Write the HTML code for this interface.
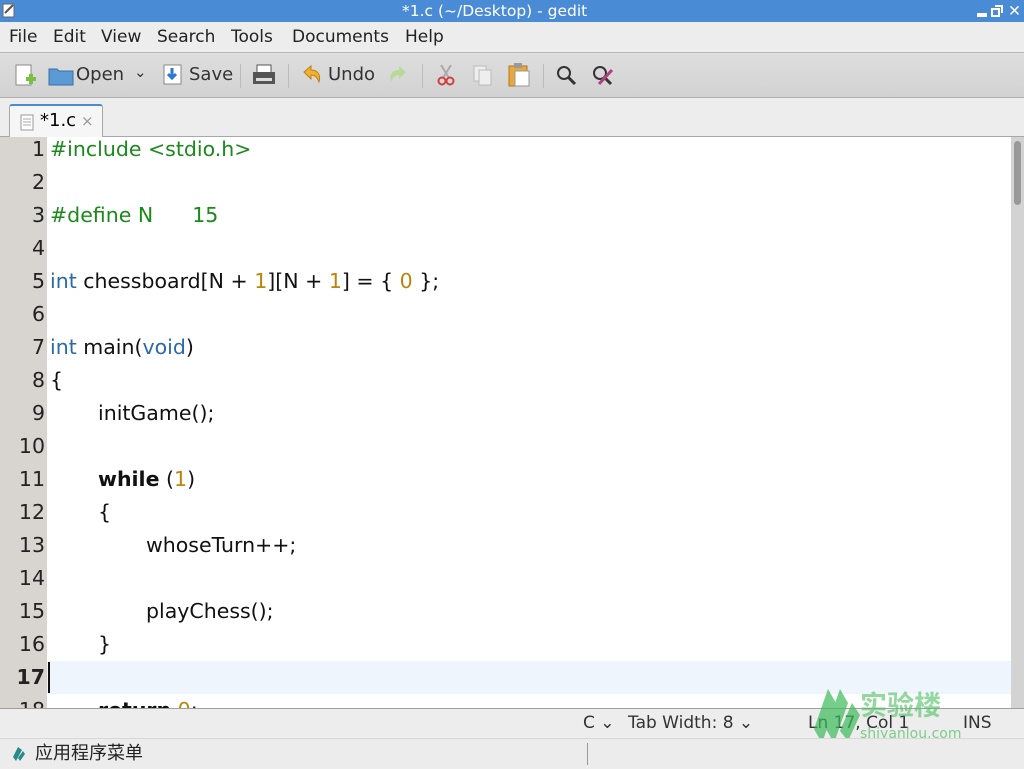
<!DOCTYPE html>
<html><head><meta charset="utf-8"><style>
*{margin:0;padding:0;box-sizing:border-box}
body{width:1024px;height:768px;overflow:hidden;background:#ededed;font-family:"DejaVu Sans","Noto Sans CJK SC",sans-serif;position:relative}
.abs{position:absolute}
#title{left:0;top:0;width:1024px;height:22px;background:#4a8bd6;color:#fff;font-size:15.5px;line-height:22px}
#menu{top:22px;left:0;width:1024px;height:31px;background:#ededed;border-bottom:1px solid #b8b8b8;font-size:17px;line-height:31px;color:#222}
#menu span{position:absolute;top:0}
#tb{top:53px;left:0;width:1024px;height:45px;background:linear-gradient(#dedede,#d2d2d2);border-bottom:1px solid #b0b0b0;font-size:18px;color:#333}
#tabs{top:98px;left:0;width:1024px;height:39px;background:#ededed;border-bottom:1px solid #a8a8a8}
#tab{left:9px;top:6px;width:94px;height:33px;background:#f6f6f6;border:1px solid #a8a8a8;border-bottom:none;border-top:2px solid #4a8bd6;border-radius:3px 3px 0 0;font-size:18px;line-height:30px}
#gut{left:0;top:137px;width:47px;height:571px;background:#d8d5d1}
#code{left:0;top:137px;width:1011px;height:571px;overflow:hidden;background:#fff}
#inner{position:absolute;top:-4px;left:0;width:1011px}
.l{height:33px;line-height:33px;font-size:20.5px;position:relative;white-space:pre;color:#111}
.n{position:absolute;left:0;width:47px;height:33px;text-align:right;padding-right:2px;background:#d8d5d1;color:#222}
.t{position:absolute;left:50px}
.g{color:#1a8a1a}.b{color:#2a6aaa}.o{color:#b8860b}.k{font-weight:bold}
#sb{left:1011px;top:137px;width:13px;height:571px;background:#d3d3d3}
#status{top:708px;left:0;width:1024px;height:30px;background:#ededed;border-top:1px solid #a0a0a0;font-size:17px;color:#333;line-height:29px}
#panel{top:738px;left:0;width:1024px;height:30px;background:#ececec;border-top:1px solid #d8d8d8;font-size:18px;line-height:30px;color:#222}
.sep{display:inline-block;width:1px;height:24px;background:#bbb;vertical-align:middle}
</style></head><body>
<div id="title" class="abs">
<svg class="abs" style="left:2px;top:3px" width="14" height="15"><rect x="1" y="1" width="11" height="13" fill="#fff" stroke="#666"/><path d="M3 10 L11 2" stroke="#555" stroke-width="2"/></svg>
<span class="abs" style="left:402px">*1.c (~/Desktop) - gedit</span>
<span class="abs" style="left:977px;top:13px;width:10px;height:4px;background:#fff"></span>
<svg class="abs" style="left:991px;top:5px" width="12" height="12"><rect x="1" y="4" width="7" height="7" fill="none" stroke="#fff" stroke-width="2"/><path d="M4 1h7v7" fill="none" stroke="#fff" stroke-width="2"/></svg>
<span class="abs" style="left:1008px;top:0;font-weight:bold">✕</span>
</div>
<div id="menu" class="abs"><span style="left:9px">File</span><span style="left:53px">Edit</span><span style="left:101px">View</span><span style="left:157px">Search</span><span style="left:231px">Tools</span><span style="left:292px">Documents</span><span style="left:405px">Help</span></div>
<div id="tb" class="abs">
<svg class="abs" style="left:14px;top:10px" width="24" height="26"><rect x="2" y="2" width="15" height="20" fill="#fff" stroke="#888"/><rect x="12" y="14" width="10" height="4" fill="#7bc043"/><rect x="15" y="11" width="4" height="10" fill="#7bc043"/></svg>
<svg class="abs" style="left:48px;top:13px" width="26" height="20"><path d="M1 3h8l2 2h14v14H1z" fill="#5b9bd5" stroke="#3a6ea5"/></svg>
<span class="abs" style="left:76px;top:11px">Open</span>
<span class="abs" style="left:134px;top:10px;font-size:15px">⌄</span>
<svg class="abs" style="left:163px;top:11px" width="20" height="22"><rect x="1" y="1" width="17" height="19" fill="#fff" stroke="#888"/><path d="M9 4v10M5 10l4 4 4-4" stroke="#2a7ad5" stroke-width="3" fill="none"/></svg>
<span class="abs" style="left:189px;top:11px">Save</span>
<span class="sep abs" style="left:240px;top:11px"></span>
<svg class="abs" style="left:252px;top:11px" width="24" height="22"><rect x="5" y="1" width="14" height="8" fill="#fff" stroke="#555"/><rect x="1" y="8" width="22" height="12" fill="#555"/><rect x="4" y="14" width="16" height="3" fill="#ddd"/></svg>
<span class="sep abs" style="left:288px;top:11px"></span>
<svg class="abs" style="left:301px;top:11px" width="22" height="22"><path d="M3 8 L10 2 L10 6 C17 6 20 11 18 18 C16 13 14 11 10 11 L10 15 Z" fill="#f0b030" stroke="#c08010"/></svg>
<span class="abs" style="left:328px;top:11px">Undo</span>
<svg class="abs" style="left:387px;top:11px" width="22" height="22"><path d="M19 8 L12 2 L12 6 C5 6 2 11 4 18 C6 13 8 11 12 11 L12 15 Z" fill="#b9d89a"/></svg>
<span class="sep abs" style="left:422px;top:11px"></span>
<svg class="abs" style="left:435px;top:11px" width="22" height="22"><path d="M6 1 L14 14 M16 1 L8 14" stroke="#aaa" stroke-width="2"/><circle cx="7" cy="17" r="3.5" fill="none" stroke="#d04040" stroke-width="2"/><circle cx="15" cy="17" r="3.5" fill="none" stroke="#d04040" stroke-width="2"/></svg>
<svg class="abs" style="left:472px;top:11px" width="22" height="22"><rect x="2" y="2" width="12" height="15" fill="#eee" stroke="#bbb"/><rect x="7" y="6" width="12" height="15" fill="#eee" stroke="#bbb"/></svg>
<svg class="abs" style="left:507px;top:9px" width="24" height="26"><rect x="2" y="4" width="18" height="20" fill="#e8a840" stroke="#b07820"/><rect x="7" y="1" width="8" height="5" fill="#999"/><rect x="8" y="9" width="14" height="15" fill="#fff" stroke="#999"/></svg>
<span class="sep abs" style="left:543px;top:11px"></span>
<svg class="abs" style="left:555px;top:11px" width="22" height="22"><circle cx="9" cy="9" r="6" fill="none" stroke="#333" stroke-width="2"/><path d="M13 13 L20 20" stroke="#333" stroke-width="3"/></svg>
<svg class="abs" style="left:591px;top:11px" width="24" height="24"><circle cx="9" cy="9" r="6" fill="none" stroke="#333" stroke-width="2"/><path d="M13 13 L20 20" stroke="#333" stroke-width="3"/><path d="M8 20 L21 6" stroke="#b04080" stroke-width="3"/></svg>
</div>
<div id="tabs" class="abs"><div id="tab" class="abs">
<svg class="abs" style="left:10px;top:8px" width="14" height="17"><rect x="1" y="1" width="12" height="15" fill="#fff" stroke="#999"/><path d="M3 5h8M3 8h8M3 11h8" stroke="#aaa"/></svg>
<span class="abs" style="left:30px;top:0">*1.c</span><span class="abs" style="left:71px;top:0;font-size:15px;color:#999">×</span>
</div></div>
<div id="gut" class="abs"></div>
<div id="code" class="abs"><div id="inner">
<div class="l"><span class="n">1</span><span class="t g">#include &lt;stdio.h&gt;</span></div>
<div class="l"><span class="n">2</span></div>
<div class="l"><span class="n">3</span><span class="t g">#define N      15</span></div>
<div class="l"><span class="n">4</span></div>
<div class="l"><span class="n">5</span><span class="t"><span class="b">int</span> chessboard[N + <span class="o">1</span>][N + <span class="o">1</span>] = { <span class="o">0</span> };</span></div>
<div class="l"><span class="n">6</span></div>
<div class="l"><span class="n">7</span><span class="t"><span class="b">int</span> main(<span class="b">void</span>)</span></div>
<div class="l"><span class="n">8</span><span class="t">{</span></div>
<div class="l"><span class="n">9</span><span class="t" style="left:98px">initGame();</span></div>
<div class="l"><span class="n">10</span></div>
<div class="l"><span class="n">11</span><span class="t" style="left:98px"><span class="k">while</span> (<span class="o">1</span>)</span></div>
<div class="l"><span class="n">12</span><span class="t" style="left:98px">{</span></div>
<div class="l"><span class="n">13</span><span class="t" style="left:146px">whoseTurn++;</span></div>
<div class="l"><span class="n">14</span></div>
<div class="l"><span class="n">15</span><span class="t" style="left:146px">playChess();</span></div>
<div class="l"><span class="n">16</span><span class="t" style="left:98px">}</span></div>
<div class="l" style="background:#eef5fd"><span class="n k">17</span><span class="abs" style="left:48px;top:1px;width:2px;height:31px;background:#111"></span></div>
<div class="l"><span class="n">18</span><span class="t" style="left:98px"><span class="k">return</span> <span class="o">0</span>;</span></div>
</div></div>
<div id="sb" class="abs"><div class="abs" style="left:3px;top:4px;width:7px;height:64px;background:#999;border-radius:4px"></div></div>
<div id="status" class="abs">
<span class="abs" style="left:583px">C ⌄</span>
<span class="abs" style="left:628px">Tab Width: 8 ⌄</span>
<span class="abs" style="left:808px">Ln 17, Col 1</span>
<span class="abs" style="left:963px">INS</span>
<svg class="abs" style="left:808px;top:-24px;opacity:.7" width="56" height="62"><path d="M20 4 L28 18 L14 58 L6 44Z M32 4 L40 18 L26 58 L18 44Z M44 18 L52 30 L40 56 L32 46Z" fill="#3cba5a"/></svg>
<span class="abs" style="left:860px;top:-17px;font-size:27px;font-weight:bold;color:#4cc060;opacity:.6">实验楼</span>
<span class="abs" style="left:860px;top:17px;font-size:14px;line-height:16px;color:#4cc060;opacity:.7">shiyanlou.com</span>
</div>
<div id="panel" class="abs">
<svg class="abs" style="left:12px;top:7px" width="14" height="16"><path d="M6 1 L10 4 L4 15 L1 11Z M11 5 L13 8 L8 15 L6 12Z" fill="#2a8a8a"/></svg>
<span class="abs" style="left:35px">应用程序菜单</span>
<span class="abs" style="left:587px;top:4px;width:1px;height:22px;background:#999"></span>
</div>
</body></html>
